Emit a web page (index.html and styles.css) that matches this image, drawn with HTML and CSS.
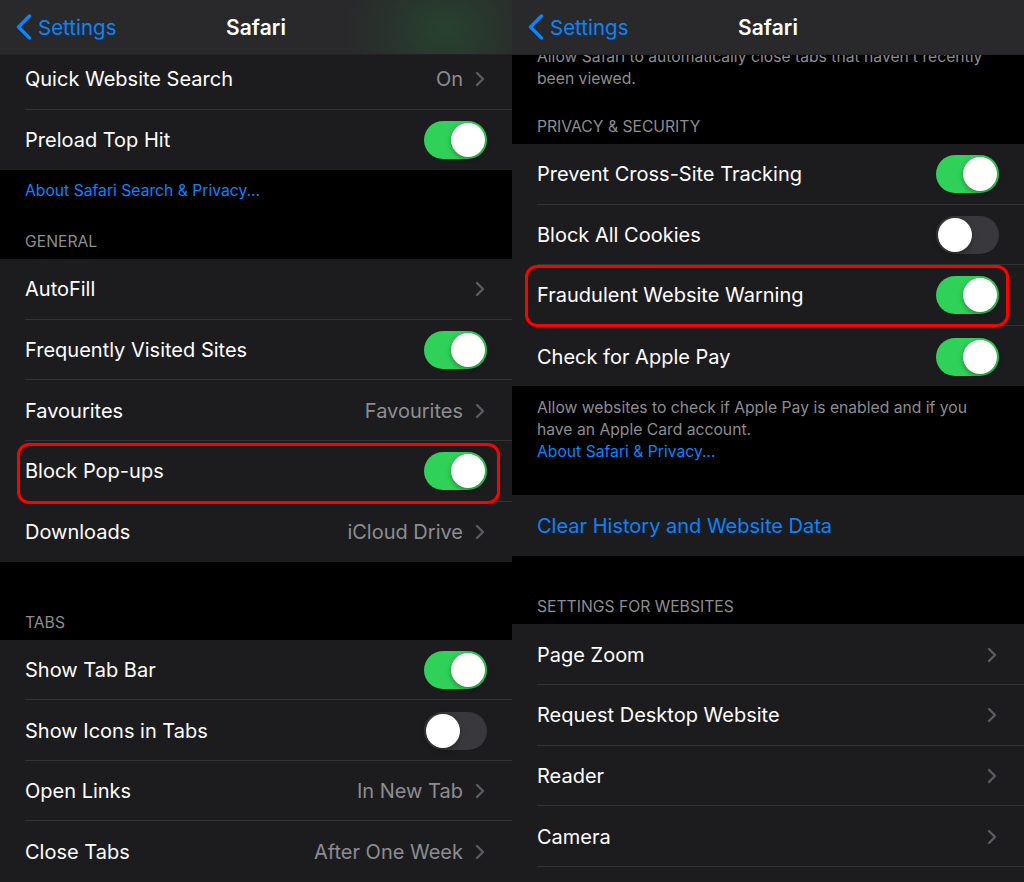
FILE: index.html
```html
<!doctype html>
<html>
<head>
<meta charset="UTF-8">
<title>Safari Settings</title>
<link rel="stylesheet" href="styles.css">
</head>
<body>

<div class="screens">

<!-- left screen: general + tabs -->
<div class="phone">
   <div class="navbar navbar-glow">
      <a class="back">
         <svg class="back-icon" width="16" height="26" viewBox="0 0 16 26"><path d="M13.5 2 L2.5 13 L13.5 24" /></svg>
         Settings
      </a>
      <h1>Safari</h1>
   </div>

   <ul class="group top-left">
      <li class="row"><div class="row-body"><span>Quick Website Search</span><span class="value">On<svg class="chevron" width="10" height="16" viewBox="0 0 10 16"><path d="M2 2 L8 8 L2 14" /></svg></span></div></li>
      <li class="row"><div class="row-body"><span>Preload Top Hit</span><span class="switch on"></span></div></li>
   </ul>
   <p class="footer"><a>About Safari Search &amp; Privacy...</a></p>

   <h3 class="section-header general">General</h3>
   <ul class="group">
      <li class="row"><div class="row-body"><span>AutoFill</span><span class="value"><svg class="chevron" width="10" height="16" viewBox="0 0 10 16"><path d="M2 2 L8 8 L2 14" /></svg></span></div></li>
      <li class="row"><div class="row-body"><span>Frequently Visited Sites</span><span class="switch on"></span></div></li>
      <li class="row"><div class="row-body"><span>Favourites</span><span class="value">Favourites<svg class="chevron" width="10" height="16" viewBox="0 0 10 16"><path d="M2 2 L8 8 L2 14" /></svg></span></div></li>
      <li class="row"><div class="row-body"><span>Block Pop-ups</span><span class="switch on"></span></div><span class="highlight highlight-left"></span></li>
      <li class="row"><div class="row-body"><span>Downloads</span><span class="value">iCloud Drive<svg class="chevron" width="10" height="16" viewBox="0 0 10 16"><path d="M2 2 L8 8 L2 14" /></svg></span></div></li>
   </ul>

   <h3 class="section-header tabs">Tabs</h3>
   <ul class="group">
      <li class="row"><div class="row-body"><span>Show Tab Bar</span><span class="switch on"></span></div></li>
      <li class="row"><div class="row-body"><span>Show Icons in Tabs</span><span class="switch"></span></div></li>
      <li class="row"><div class="row-body"><span>Open Links</span><span class="value">In New Tab<svg class="chevron" width="10" height="16" viewBox="0 0 10 16"><path d="M2 2 L8 8 L2 14" /></svg></span></div></li>
      <li class="row"><div class="row-body"><span>Close Tabs</span><span class="value">After One Week<svg class="chevron" width="10" height="16" viewBox="0 0 10 16"><path d="M2 2 L8 8 L2 14" /></svg></span></div></li>
   </ul>
</div>

<!-- right screen: privacy + websites -->
<div class="phone">
   <div class="navbar">
      <a class="back">
         <svg class="back-icon" width="16" height="26" viewBox="0 0 16 26"><path d="M13.5 2 L2.5 13 L13.5 24" /></svg>
         Settings
      </a>
      <h1>Safari</h1>
   </div>

   <p class="footer top-right">Allow Safari to automatically close tabs that haven’t recently been viewed.</p>

   <h3 class="section-header privacy">Privacy &amp; Security</h3>
   <ul class="group">
      <li class="row"><div class="row-body"><span>Prevent Cross-Site Tracking</span><span class="switch on"></span></div></li>
      <li class="row"><div class="row-body"><span>Block All Cookies</span><span class="switch"></span></div></li>
      <li class="row"><div class="row-body"><span>Fraudulent Website Warning</span><span class="switch on"></span></div><span class="highlight highlight-right"></span></li>
      <li class="row"><div class="row-body"><span>Check for Apple Pay</span><span class="switch on"></span></div></li>
   </ul>
   <p class="footer pay-note">Allow websites to check if Apple Pay is enabled and if you have an Apple Card account.<br><a>About Safari &amp; Privacy...</a></p>

   <ul class="group clear-group">
      <li class="row"><div class="row-body"><span class="link">Clear History and Website Data</span></div></li>
   </ul>

   <h3 class="section-header websites">Settings for Websites</h3>
   <ul class="group">
      <li class="row"><div class="row-body"><span>Page Zoom</span><span class="value"><svg class="chevron" width="10" height="16" viewBox="0 0 10 16"><path d="M2 2 L8 8 L2 14" /></svg></span></div></li>
      <li class="row"><div class="row-body"><span>Request Desktop Website</span><span class="value"><svg class="chevron" width="10" height="16" viewBox="0 0 10 16"><path d="M2 2 L8 8 L2 14" /></svg></span></div></li>
      <li class="row"><div class="row-body"><span>Reader</span><span class="value"><svg class="chevron" width="10" height="16" viewBox="0 0 10 16"><path d="M2 2 L8 8 L2 14" /></svg></span></div></li>
      <li class="row"><div class="row-body"><span>Camera</span><span class="value"><svg class="chevron" width="10" height="16" viewBox="0 0 10 16"><path d="M2 2 L8 8 L2 14" /></svg></span></div></li>
      <li class="row"><div class="row-body"></div></li>
   </ul>
</div>

</div>
</body>
</html>
```

FILE: styles.css
```css
body, div, h1, h3, ul, li, p, a {
   margin: 0;
   padding: 0;
   border: 0;
}

body {
   background: #000;
   color: #fff;
   font-family: Inter, "Noto Sans", sans-serif;
}

.screens {
   display: flex;
   width: 1024px;
   height: 882px;
   overflow: hidden;
}

.phone {
   position: relative;
   width: 512px;
   height: 882px;
   overflow: hidden;
   background: #000;
}

/* nav bar floats over the scrolled list */
.navbar {
   position: absolute;
   top: 0;
   left: 0;
   right: 0;
   height: 54px;
   z-index: 5;
   background: #29292b;
   border-bottom: 1px solid #222224;
   display: flex;
   align-items: center;
   justify-content: center;
}

.navbar-glow {
   background: radial-gradient(ellipse 100px 80px at 445px 30px, rgba(38, 90, 50, 0.5), rgba(38, 90, 50, 0) 100%), #29292b;
}

.navbar h1 {
   font-size: 21px;
   font-weight: 600;
   letter-spacing: 0.1px;
}

.back {
   position: absolute;
   left: 16px;
   top: 0;
   height: 54px;
   display: flex;
   align-items: center;
   gap: 6px;
   color: #0a84ff;
   font-size: 20.5px;
}

.back-icon path {
   fill: none;
   stroke: #0a84ff;
   stroke-width: 3.4;
   stroke-linecap: round;
   stroke-linejoin: round;
}

.group {
   list-style: none;
   background: #1c1c1e;
}

.row {
   position: relative;
   height: 60.6px;
   padding-left: 25px;
   font-size: 20px;
}

.row-body {
   box-sizing: border-box;
   height: 100%;
   display: flex;
   align-items: center;
   justify-content: space-between;
   padding-top: 1px;
   padding-right: 25px;
}

.row:not(:last-child) .row-body {
   border-bottom: 1px solid #333336;
}

.value {
   display: flex;
   align-items: center;
   gap: 12px;
   color: #8d8d92;
}

.chevron {
   margin-right: 2px;
}

.chevron path {
   fill: none;
   stroke: #5b5b60;
   stroke-width: 2.4;
   stroke-linecap: round;
   stroke-linejoin: round;
}

.link {
   color: #0a84ff;
}

/* ios switch */
.switch {
   position: relative;
   width: 63px;
   height: 38px;
   border-radius: 19px;
   background: #39393d;
}

.switch::after {
   content: "";
   position: absolute;
   top: 2px;
   left: 2px;
   width: 34px;
   height: 34px;
   border-radius: 50%;
   background: #fff;
   box-shadow: 0 2px 5px rgba(0, 0, 0, 0.35);
}

.switch.on {
   background: #30d158;
}

.switch.on::after {
   left: 27px;
}

.footer {
   padding: 10px 25px 0;
   font-size: 15.7px;
   line-height: 22px;
   color: #8d8d92;
}

.footer a {
   color: #0a84ff;
}

.section-header {
   padding: 1px 25px 6px;
   font-size: 15.7px;
   font-weight: 400;
   line-height: 22px;
   color: #8d8d92;
   text-transform: uppercase;
}

/* red annotation boxes */
.highlight {
   position: absolute;
   border: 3px solid #ff0000;
   border-radius: 12px;
}

.highlight-left {
   left: 17px;
   right: 12px;
   top: 2px;
   bottom: -2px;
}

.highlight-right {
   left: 13px;
   right: 15px;
   top: 0;
   bottom: -1px;
}

/* vertical spacing of the scrolled lists */
.top-left {
   margin-top: 49px;
}

.general {
   margin-top: 28px;
}

.tabs {
   margin-top: 48.5px;
}

.top-right {
   padding-top: 46px;
   padding-right: 18px;
}

.privacy {
   margin-top: 25px;
}

.pay-note {
   padding-top: 11px;
   padding-right: 40px;
}

.clear-group {
   margin-top: 32px;
}

.websites {
   margin-top: 39.5px;
}
```
